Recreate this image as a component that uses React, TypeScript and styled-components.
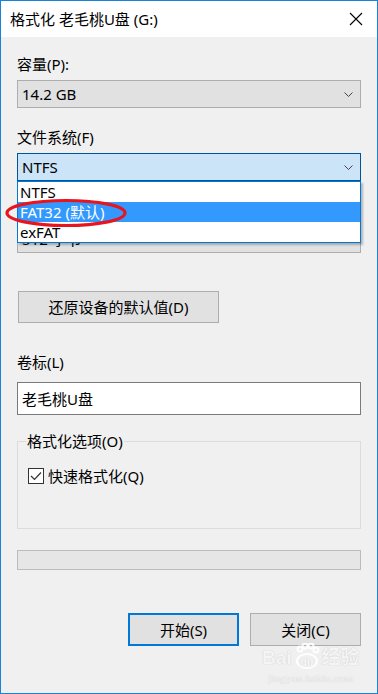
import React from "react";
import styled, { createGlobalStyle } from "styled-components";

const Global = createGlobalStyle`
  html, body { margin: 0; padding: 0; background: #f0f0f0; }
  body { font-family: "Noto Sans", "Noto Sans CJK SC", sans-serif; font-size: 15px; color: #000; }
  * { box-sizing: border-box; }
`;

const Window = styled.div`
  position: relative;
  width: 378px;
  height: 694px;
  border: 1px solid #1883d7;
  background: #f0f0f0;
  display: flex;
  flex-direction: column;
  overflow: hidden;
`;

const TitleBar = styled.div`
  height: 36px;
  background: #fff;
  display: flex;
  align-items: center;
  justify-content: space-between;
  padding: 0 14px 0 9px;
  font-size: 15px;
  line-height: 20px;
`;

const CloseBtn = styled.div`
  width: 14px;
  height: 14px;
  display: flex;
`;

const Body = styled.div`
  position: relative;
  display: flex;
  flex-direction: column;
  padding: 0 16px;
`;

const Label = styled.div<{ $mt: number }>`
  margin-top: ${(p) => p.$mt}px;
  height: 20px;
  line-height: 20px;
`;

const ComboWrap = styled.div<{ $mt: number }>`
  position: relative;
  margin-top: ${(p) => p.$mt}px;
  z-index: ${(p) => (p.$mt === 6 ? 1 : 0)};
`;

const Combo = styled.div<{ $open?: boolean }>`
  height: 28px;
  display: flex;
  align-items: center;
  justify-content: space-between;
  padding: 0 7px 0 4px;
  background: ${(p) => (p.$open ? "#cce4f7" : "#e1e1e1")};
  border: 1px solid ${(p) => (p.$open ? "#005499" : "#adadad")};
  line-height: 20px;
`;

const DropList = styled.div`
  position: absolute;
  top: 100%;
  left: 0;
  right: 0;
  background: #fff;
  border: 1px solid #0078d7;
  box-shadow: 2px 2px 2px rgba(0, 0, 0, 0.25);
  z-index: 2;
`;

const Option = styled.div<{ $sel?: boolean }>`
  height: 20px;
  line-height: 20px;
  padding-left: 2px;
  background: ${(p) => (p.$sel ? "#3399ff" : "#fff")};
  color: ${(p) => (p.$sel ? "#fff" : "#000")};
`;

const Button = styled.div<{ $focus?: boolean; $w: number }>`
  width: ${(p) => p.$w}px;
  height: ${(p) => (p.$focus !== undefined ? 33 : 32)}px;
  display: flex;
  align-items: center;
  justify-content: center;
  background: #e1e1e1;
  border: ${(p) => (p.$focus ? "2px solid #0078d7" : "1px solid #adadad")};
  line-height: 20px;
`;

const ResetRow = styled.div`
  margin-top: 38px;
  padding-left: 1px;
`;

const TextInput = styled.div`
  margin-top: 10px;
  height: 33px;
  background: #fff;
  border: 1px solid #7a7a7a;
  display: flex;
  align-items: center;
  padding-left: 4px;
  line-height: 20px;
`;

const GroupBox = styled.fieldset`
  margin: 16px 0 0 0;
  padding: 0 8px 42px 8px;
  border: 1px solid #dcdcdc;
  min-width: 0;
`;

const Legend = styled.legend`
  padding: 0 1px;
  line-height: 20px;
  height: 20px;
`;

const CheckRow = styled.div`
  margin-top: 15px;
  height: 20px;
  display: flex;
  align-items: center;
  gap: 4px;
  padding-left: 2px;
  line-height: 20px;
`;

const CheckBox = styled.div`
  width: 16px;
  height: 16px;
  border: 1px solid #333;
  background: #fff;
  display: flex;
  align-items: center;
  justify-content: center;
`;

const Progress = styled.div`
  margin-top: 21px;
  height: 20px;
  background: #e6e6e6;
  border: 1px solid #bcbcbc;
`;

const ButtonRow = styled.div`
  margin-top: 43px;
  display: flex;
  justify-content: flex-end;
  gap: 11px;
`;

const Annotation = styled.svg`
  position: absolute;
  left: 3px;
  top: 196px;
  z-index: 5;
`;

const Watermark = styled.div`
  position: absolute;
  left: 261px;
  top: 642px;
  display: flex;
  flex-direction: column;
  align-items: center;
  color: rgba(255, 255, 255, 0.85);
  text-shadow: 0 0 1px rgba(150, 150, 150, 0.6);
  pointer-events: none;
`;

const WmTop = styled.div`
  display: flex;
  align-items: flex-end;
  font-family: "Liberation Sans", "Noto Sans CJK SC", sans-serif;
  font-weight: bold;
  font-size: 19px;
  line-height: 22px;
`;

const WmSmall = styled.div`
  font-family: "Liberation Serif", serif;
  font-size: 11px;
  line-height: 12px;
  margin-top: 3px;
  letter-spacing: 0.2px;
`;

const Chevron = () => (
  <svg width="9" height="5" viewBox="0 0 9 5">
    <polyline points="0.5,0.5 4.5,4.5 8.5,0.5" fill="none" stroke="#444" strokeWidth="1" />
  </svg>
);

export default function App() {
  return (
    <>
      <Global />
      <Window>
        <TitleBar>
          <span>格式化 老毛桃U盘 (G:)</span>
          <CloseBtn>
            <svg width="14" height="14" viewBox="0 0 14 14">
              <path d="M1 1 L13 13 M13 1 L1 13" stroke="#000" strokeWidth="1.1" />
            </svg>
          </CloseBtn>
        </TitleBar>
        <Body>
          <Label $mt={17}>容量(P):</Label>
          <ComboWrap $mt={6}>
            <Combo>
              <span>14.2 GB</span>
              <Chevron />
            </Combo>
          </ComboWrap>
          <Label $mt={19}>文件系统(F)</Label>
          <ComboWrap $mt={6}>
            <Combo $open>
              <span>NTFS</span>
              <Chevron />
            </Combo>
            <DropList>
              <Option>NTFS</Option>
              <Option $sel>FAT32 (默认)</Option>
              <Option>exFAT</Option>
            </DropList>
          </ComboWrap>
          <Label $mt={19}>分配单元大小(A)</Label>
          <ComboWrap $mt={5}>
            <Combo>
              <span>512 字节</span>
              <Chevron />
            </Combo>
          </ComboWrap>
          <ResetRow>
            <Button $w={201}>还原设备的默认值(D)</Button>
          </ResetRow>
          <Label $mt={29}>卷标(L)</Label>
          <TextInput>老毛桃U盘</TextInput>
          <GroupBox>
            <Legend>格式化选项(O)</Legend>
            <CheckRow>
              <CheckBox>
                <svg width="12" height="10" viewBox="0 0 12 10">
                  <polyline points="1,5 4.5,8.5 11,1.5" fill="none" stroke="#333" strokeWidth="1.2" />
                </svg>
              </CheckBox>
              <span>快速格式化(Q)</span>
            </CheckRow>
          </GroupBox>
          <Progress />
          <ButtonRow>
            <Button $w={111} $focus>开始(S)</Button>
            <Button $w={111} $focus={false}>关闭(C)</Button>
          </ButtonRow>
        </Body>
        <Annotation width="124" height="32" viewBox="0 0 124 32">
          <ellipse cx="62" cy="16" rx="59" ry="12.5" fill="none" stroke="#e8141e" strokeWidth="3.2" />
        </Annotation>
        <Watermark>
          <WmTop>
            <span>Bai</span>
            <svg width="30" height="26" viewBox="0 0 30 26">
              <g fill="none" stroke="rgba(255,255,255,0.9)" strokeWidth="2">
                <ellipse cx="15" cy="18" rx="10" ry="7" />
                <circle cx="8" cy="6" r="2.5" />
                <circle cx="13" cy="3" r="2.5" />
                <circle cx="19" cy="3" r="2.5" />
                <circle cx="24" cy="7" r="2.5" />
              </g>
              <text x="8" y="23" fontSize="11" fontWeight="bold" fill="rgba(255,255,255,0.9)" fontFamily="Liberation Sans, sans-serif">du</text>
            </svg>
            <span>经验</span>
          </WmTop>
          <WmSmall>jingyan.baidu.com</WmSmall>
        </Watermark>
      </Window>
    </>
  );
}
